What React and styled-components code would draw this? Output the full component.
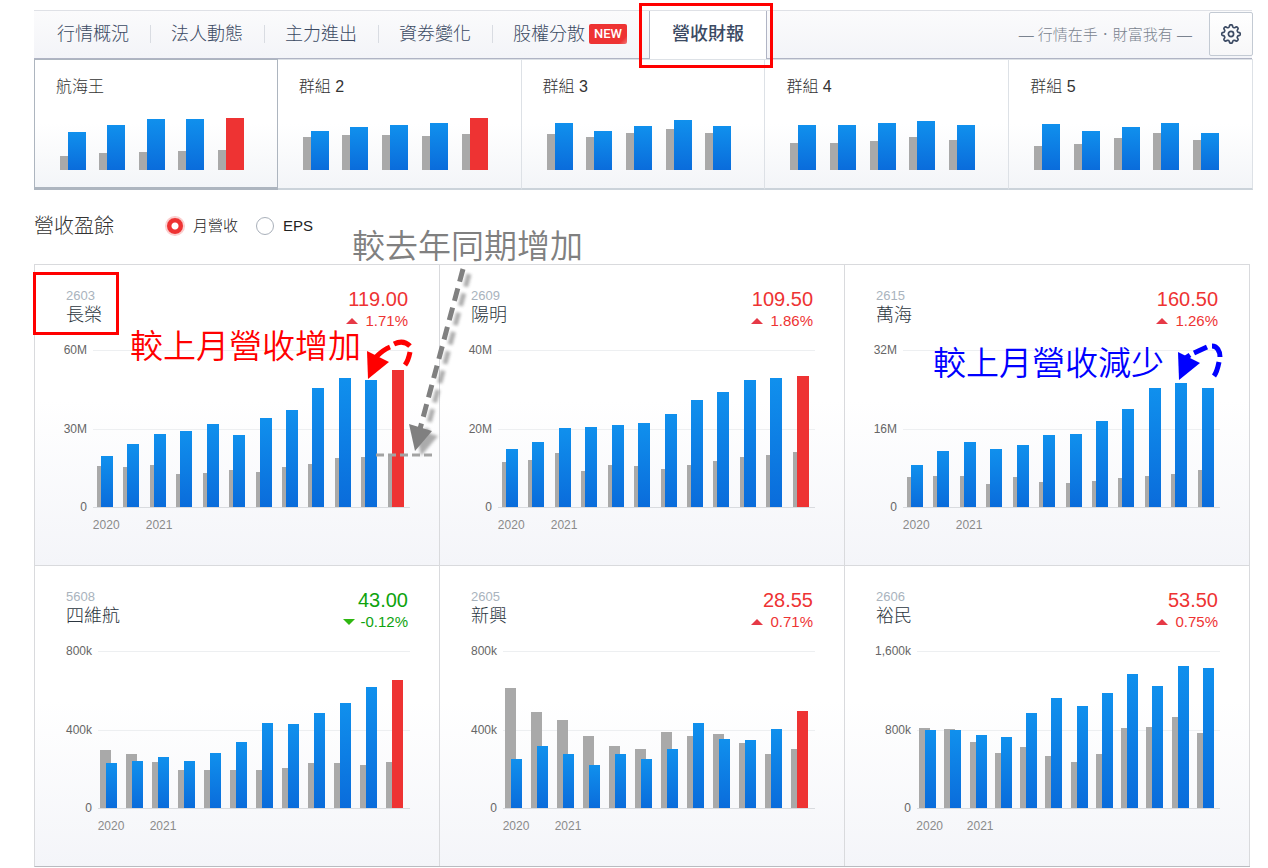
import React, { useState } from "react";
import styled, { createGlobalStyle } from "styled-components";

const GlobalStyle = createGlobalStyle`
  * {
    box-sizing: border-box;
  }
  body {
    margin: 0;
    background: #ffffff;
    color: #333333;
    font-family: "Liberation Sans", "Noto Sans CJK TC", sans-serif;
    font-weight: 300;
  }
  button {
    font: inherit;
    color: inherit;
    cursor: pointer;
  }
`;

const Page = styled.main`
  padding: 10px 16px 1px 34px;
`;

const Header = styled.header`
  display: flex;
  height: 49px;
  border-top: 1px solid #dfe1e6;
  border-bottom: 1px solid #b0b4c4;
  background: linear-gradient(#fbfbfc, #f3f4f8);
`;

const Nav = styled.nav`
  display: flex;
  flex: 1;
  padding-left: 3px;
`;

const Tab = styled.a`
  display: flex;
  align-items: center;
  height: 46px;
  padding: 0 22px 0 20px;
  color: #3b4a63;
  font-size: 18px;
  line-height: 24px;
  text-decoration: none;
  white-space: nowrap;
  & + &::before {
    content: "";
    width: 1px;
    height: 18px;
    margin: 0 20px 0 -21px;
    background: #d9dce2;
  }
`;

const ActiveTab = styled(Tab)`
  position: relative;
  height: 48px;
  margin-bottom: -1px;
  padding: 0 22px 2px;
  border: solid #b0b4c4;
  border-width: 0 1px;
  background: #ffffff;
  font-weight: 500;
  &&::before {
    content: none;
  }
`;

const NewBadge = styled.span`
  margin-left: 4px;
  padding: 0 5px;
  border-radius: 2px;
  background: linear-gradient(135deg, #ee3333 85%, #f27a7a);
  color: #ffffff;
  font: 500 13px/20px Roboto, sans-serif;
`;

const Slogan = styled.p`
  margin: 0 17px 0 0;
  color: #7a838f;
  font-size: 15px;
  line-height: 48px;
  white-space: nowrap;
`;

const SettingsButton = styled.button`
  display: flex;
  align-items: center;
  justify-content: center;
  width: 44px;
  height: 44px;
  margin: 1px -1px 0 0;
  padding: 0;
  border: 1px solid #c3cad3;
  border-radius: 2px;
  background: linear-gradient(#ffffff, #f7f7f8);
`;

const Groups = styled.div`
  display: grid;
  grid-template-columns: repeat(5, 1fr);
  margin-right: -1px;
`;

const GroupCard = styled.button`
  display: flex;
  flex-direction: column;
  height: 131px;
  padding: 15px 33px 0 21px;
  border: 1px solid #dde1e6;
  border-left-width: ${(props) => (props.$active ? "1px" : 0)};
  border-bottom: ${(props) =>
    props.$active ? "3px solid #adb5bf" : "2px solid #cbd3da"};
  ${(props) => props.$active && "border-color: #adb5bf;"}
  background: linear-gradient(#ffffff 50%, #f3f5f8);
  text-align: left;
`;

const GroupName = styled.span`
  font-size: 16px;
  line-height: 24px;
`;

const MiniBars = styled.span`
  display: flex;
  align-items: flex-end;
  justify-content: space-between;
  align-self: stretch;
  height: 60px;
  margin-top: 11px;
  padding-left: 4px;
`;

const MiniPair = styled.span`
  display: flex;
  align-items: flex-end;
`;

const Bar = styled.span`
  display: block;
  flex: none;
  width: ${(props) => props.$width}px;
  background: ${(props) =>
    props.$tone === "high"
      ? "#ee3333"
      : props.$tone === "last"
        ? "#a9a9a9"
        : "linear-gradient(#1090ed, #0a6cdb)"};
`;

const Filter = styled.div`
  display: flex;
  align-items: center;
  height: 74px;
  padding-bottom: 2px;
`;

const FilterTitle = styled.h2`
  width: 132px;
  margin: 0;
  font-size: 20px;
  font-weight: 300;
  line-height: 24px;
`;

const RadioLabel = styled.label`
  display: flex;
  align-items: center;
  gap: 9px;
  margin-right: 18px;
  color: #222222;
  font-size: 15px;
  line-height: 24px;
`;

const Radio = styled.input`
  appearance: none;
  width: 18px;
  height: 18px;
  margin: 0;
  border: 1px solid #a9b0ba;
  border-radius: 50%;
  background: #ffffff;
  &:checked {
    border-color: #fbc9c9;
    background: radial-gradient(circle, #ffffff 3px, #ee3333 4px);
    box-shadow: 0 0 0 1px #fbc9c9;
  }
`;

const StockGrid = styled.div`
  display: grid;
  grid-template-columns: repeat(3, 1fr);
  margin-right: 2px;
  border: solid #d9dadd;
  border-width: 0 0 1px 1px;
  border-bottom-color: #b9bbc0;
`;

const StockCard = styled.section`
  position: relative;
  height: 301px;
  padding-right: 29px;
  border: solid #d9dadd;
  border-width: 1px 1px 0 0;
  background: linear-gradient(#ffffff 45%, #f4f5f9);
`;

const StockHead = styled.div`
  display: flex;
  justify-content: space-between;
  height: 75px;
  padding: 22px 2px 0 31px;
`;

const Code = styled.div`
  color: #a9b3bd;
  font-size: 13px;
  line-height: 17px;
`;

const Name = styled.h3`
  margin: 0;
  color: #2c3640;
  font-size: 18px;
  font-weight: 300;
  line-height: 22px;
`;

const Quote = styled.div`
  color: ${(props) => (props.$down ? "#0ea30e" : "#ee3333")};
  text-align: right;
`;

const Price = styled.div`
  font-size: 20px;
  line-height: 25px;
`;

const Change = styled.div`
  display: flex;
  align-items: center;
  justify-content: flex-end;
  gap: ${(props) => (props.$down ? 5 : 7)}px;
  font-size: 15px;
  line-height: 18px;
  &::before {
    content: "";
    border: solid transparent;
    border-width: ${(props) => (props.$down ? "6px 6px 0" : "0 6px 6px")};
    border-top-color: ${(props) => (props.$down ? "#2fb711" : "transparent")};
    border-bottom-color: ${(props) => (props.$down ? "transparent" : "#e63946")};
  }
`;

const Chart = styled.div`
  display: flex;
  gap: 6px;
  margin-top: 2px;
`;

const YAxis = styled.div`
  display: flex;
  flex-direction: column;
  justify-content: space-between;
  width: ${(props) => props.$width}px;
  height: 173px;
  color: #666666;
  font-size: 12px;
  line-height: 16px;
  text-align: right;
`;

const Plot = styled.div`
  display: flex;
  flex: 1;
  height: 166px;
  padding-top: 8px;
  border-bottom: 1px solid #d9dbdf;
  background: linear-gradient(#edeff1, #edeff1) 0 8px / 100% 1px no-repeat,
    linear-gradient(#edeff1, #edeff1) 0 87px / 100% 1px no-repeat;
`;

const Month = styled.div`
  position: relative;
  display: flex;
  flex: 1;
  align-items: flex-end;
  padding-left: ${(props) => props.$inset}px;
  ${Bar} + ${Bar} {
    margin-left: ${(props) => props.$overlap}px;
  }
`;

/* hangs under the baseline, centred on its month */
const Year = styled.span`
  position: absolute;
  top: 100%;
  left: 0;
  right: 0;
  display: flex;
  justify-content: center;
  margin-top: 10px;
  color: #8a8a8a;
  font-size: 12px;
  line-height: 16px;
`;

const MarkBox = styled.span`
  position: absolute;
  inset: ${(props) => props.$inset};
  border: 3px solid #ff0000;
  z-index: 2;
`;

const Note = styled.span`
  position: absolute;
  top: ${(props) => props.$top}px;
  left: ${(props) => props.$left}px;
  color: ${(props) => props.$color};
  font-size: 33px;
  font-weight: 350;
  line-height: 40px;
  white-space: nowrap;
  z-index: 2;
`;

const Marks = styled.svg`
  position: absolute;
  top: -1px;
  left: -1px;
  overflow: visible;
  pointer-events: none;
  z-index: 2;
`;

const groups = [
  { name: "航海王", now: [38, 45, 51, 51, 52], last: [14, 17, 18, 19, 20], high: true },
  { name: "群組 2", now: [39, 43, 45, 47, 52], last: [33, 35, 35, 34, 36], high: true },
  { name: "群組 3", now: [47, 39, 44, 50, 44], last: [36, 33, 37, 41, 37] },
  { name: "群組 4", now: [45, 45, 47, 49, 45], last: [27, 27, 29, 33, 30] },
  { name: "群組 5", now: [46, 39, 43, 47, 37], last: [24, 26, 32, 37, 30] },
];

const stocks = [
  {
    code: "2603",
    name: "長榮",
    price: "119.00",
    change: "1.71%",
    ticks: ["60M", "30M", "0"],
    axis: 52,
    now: [51, 63, 73, 76, 83, 72, 89, 97, 119, 129, 127, 137],
    last: [41, 40, 42, 33, 34, 37, 35, 40, 43, 49, 50, 52],
    high: true,
  },
  {
    code: "2609",
    name: "陽明",
    price: "109.50",
    change: "1.86%",
    ticks: ["40M", "20M", "0"],
    axis: 52,
    now: [58, 65, 79, 80, 82, 84, 93, 107, 115, 127, 129, 131],
    last: [45, 47, 54, 36, 42, 41, 38, 42, 46, 50, 52, 55],
    high: true,
  },
  {
    code: "2615",
    name: "萬海",
    price: "160.50",
    change: "1.26%",
    ticks: ["32M", "16M", "0"],
    axis: 52,
    now: [42, 56, 65, 58, 62, 72, 73, 86, 98, 119, 124, 119],
    last: [30, 31, 31, 23, 30, 25, 24, 26, 29, 31, 33, 37],
  },
  {
    code: "5608",
    name: "四維航",
    price: "43.00",
    change: "-0.12%",
    down: true,
    ticks: ["800k", "400k", "0"],
    axis: 57,
    narrow: true,
    now: [45, 47, 51, 47, 55, 66, 85, 84, 95, 105, 121, 128],
    last: [58, 54, 46, 38, 38, 38, 38, 40, 45, 45, 43, 46],
    high: true,
  },
  {
    code: "2605",
    name: "新興",
    price: "28.55",
    change: "0.71%",
    ticks: ["800k", "400k", "0"],
    axis: 57,
    narrow: true,
    now: [49, 62, 54, 43, 54, 49, 59, 85, 69, 68, 79, 97],
    last: [120, 96, 88, 72, 62, 59, 76, 72, 74, 65, 54, 59],
    high: true,
  },
  {
    code: "2606",
    name: "裕民",
    price: "53.50",
    change: "0.75%",
    ticks: ["1,600k", "800k", "0"],
    axis: 66,
    narrow: true,
    now: [78, 78, 73, 71, 95, 110, 102, 115, 134, 122, 142, 140],
    last: [80, 79, 66, 55, 61, 52, 46, 54, 80, 81, 91, 75],
  },
];

const years = { 0: "2020", 2: "2021" };

const gearPath = () => {
  const points = [];
  for (let i = 0; i <= 144; i++) {
    const a = (i / 144) * Math.PI * 2;
    const wave = Math.tanh(2 * Math.cos(8 * a)) / Math.tanh(2);
    const r = 8.1 + 1.1 * wave;
    points.push(`${(11 + r * Math.sin(a)).toFixed(2)} ${(11 - r * Math.cos(a)).toFixed(2)}`);
  }
  return `M${points.join("L")}Z`;
};

const GearIcon = () => (
  <svg width="22" height="22" viewBox="0 0 22 22" fill="none" stroke="#3b4a63" strokeWidth="1.7" strokeLinejoin="round">
    <path d={gearPath()} />
    <circle cx="11" cy="11" r="2.6" />
  </svg>
);

const Group = ({ group, active }) => (
  <GroupCard type="button" $active={active}>
    <GroupName>{group.name}</GroupName>
    <MiniBars>
      {group.now.map((value, i) => (
        <MiniPair key={i}>
          <Bar $tone="last" $width={8} style={{ height: group.last[i] }} />
          <Bar
            $tone={group.high && i === 4 ? "high" : "now"}
            $width={18}
            style={{ height: value }}
          />
        </MiniPair>
      ))}
    </MiniBars>
  </GroupCard>
);

const Stock = ({ stock, children }) => {
  const width = stock.narrow ? 11 : 12;
  return (
    <StockCard>
      <StockHead>
        <div>
          <Code>{stock.code}</Code>
          <Name>{stock.name}</Name>
        </div>
        <Quote $down={stock.down}>
          <Price>{stock.price}</Price>
          <Change $down={stock.down}>{stock.change}</Change>
        </Quote>
      </StockHead>
      <Chart>
        <YAxis $width={stock.axis}>
          {stock.ticks.map((tick) => (
            <span key={tick}>{tick}</span>
          ))}
        </YAxis>
        <Plot>
          {stock.now.map((value, i) => (
            <Month key={i} $inset={stock.narrow ? 2 : 4} $overlap={stock.narrow ? -5 : -8}>
              <Bar $tone="last" $width={width} style={{ height: stock.last[i] }} />
              <Bar
                $tone={stock.high && i === 11 ? "high" : "now"}
                $width={width}
                style={{ height: value }}
              />
              {years[i] && <Year>{years[i]}</Year>}
            </Month>
          ))}
        </Plot>
      </Chart>
      {children}
    </StockCard>
  );
};

const RiseNotes = () => (
  <>
    <MarkBox $inset="7px 320px 230px -2px" />
    <Note $top={-38} $left={317} $color="#808080">
      較去年同期增加
    </Note>
    <Note $top={62} $left={95} $color="#ff0000">
      較上月營收增加
    </Note>
    <Marks width="405" height="301">
      <defs>
        <filter id="soft" x="-50%" y="-20%" width="200%" height="140%">
          <feGaussianBlur stdDeviation="1.5" />
        </filter>
      </defs>
      <g fill="#777777" stroke="#777777" opacity="0.6" filter="url(#soft)" transform="translate(6 5)">
        <path d="M429 5L386 165" strokeWidth="5" strokeDasharray="13 7" />
        <path d="M375 160L398 167L381 187Z" stroke="none" />
      </g>
      <path d="M429 5L386 165" stroke="#808080" strokeWidth="5" strokeDasharray="13 7" />
      <path d="M375 160L398 167L381 187Z" fill="#808080" />
      <path d="M342 191H400" stroke="#a3a3a3" strokeWidth="3" strokeDasharray="8 4" />
      <path
        d="M371 101C374 97 375 93 376 88M376 82C371 77 366 77 360 80M356 83C351 85 347 88 342 93"
        fill="none"
        stroke="#ff0000"
        strokeWidth="5"
      />
      <path d="M333 87L355 98L334 115Z" fill="#ff0000" />
    </Marks>
  </>
);

const FallNotes = () => (
  <>
    <Note $top={79} $left={88} $color="#0000ff">
      較上月營收減少
    </Note>
    <Marks width="405" height="301">
      <path
        d="M370 112C373 108 374 103 375 98M376 93C376 87 373 82 368 82M363 83L350 89M346 91L340 95"
        fill="none"
        stroke="#0000ff"
        strokeWidth="5"
      />
      <path d="M334 88L356 99L335 116Z" fill="#0000ff" />
    </Marks>
  </>
);

const notes = { 2603: <RiseNotes />, 2615: <FallNotes /> };

const App = () => {
  const [metric, setMetric] = useState("revenue");

  return (
    <>
      <GlobalStyle />
      <Page>
        <Header>
          <Nav>
            <Tab href="#quote">行情概況</Tab>
            <Tab href="#legal">法人動態</Tab>
            <Tab href="#major">主力進出</Tab>
            <Tab href="#margin">資券變化</Tab>
            <Tab href="#holders">
              股權分散
              <NewBadge>NEW</NewBadge>
            </Tab>
            <ActiveTab href="#revenue">
              營收財報
              <MarkBox $inset="-8px -7px -9px -11px" />
            </ActiveTab>
          </Nav>
          <Slogan>— 行情在手．財富我有 —</Slogan>
          <SettingsButton type="button" aria-label="設定">
            <GearIcon />
          </SettingsButton>
        </Header>
        <Groups>
          {groups.map((group, i) => (
            <Group key={group.name} group={group} active={i === 0} />
          ))}
        </Groups>
        <Filter>
          <FilterTitle>營收盈餘</FilterTitle>
          <RadioLabel>
            <Radio
              type="radio"
              name="metric"
              checked={metric === "revenue"}
              onChange={() => setMetric("revenue")}
            />
            月營收
          </RadioLabel>
          <RadioLabel>
            <Radio
              type="radio"
              name="metric"
              checked={metric === "eps"}
              onChange={() => setMetric("eps")}
            />
            EPS
          </RadioLabel>
        </Filter>
        <StockGrid>
          {stocks.map((stock) => (
            <Stock key={stock.code} stock={stock}>
              {notes[stock.code]}
            </Stock>
          ))}
        </StockGrid>
      </Page>
    </>
  );
};

export default App;
